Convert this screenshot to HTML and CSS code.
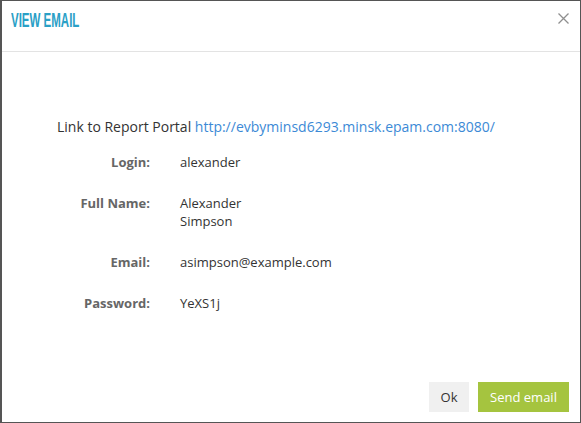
FILE: index.html
```html
<!DOCTYPE html>
<html>
<head>
<meta charset="utf-8">
<link rel="stylesheet" href="styles.css">
</head>
<body>
<div class="dialog">
  <div class="header">
    <h1 class="title">VIEW EMAIL</h1>
    <span class="close">
      <svg width="11" height="11" viewBox="0 0 11 11"><path d="M0.5 0.5L10.5 10.5M10.5 0.5L0.5 10.5" stroke="#8f8f8f" stroke-width="1.3" fill="none"/></svg>
    </span>
  </div>
  <div class="body">
    <p class="link-line">Link to Report Portal <a href="#">http://evbyminsd6293.minsk.epam.com:8080/</a></p>
    <div class="fields">
      <div class="label">Login:</div><div class="value">alexander</div>
      <div class="label">Full Name:</div><div class="value">Alexander<br>Simpson</div>
      <div class="label">Email:</div><div class="value">asimpson@example.com</div>
      <div class="label">Password:</div><div class="value">YeXS1j</div>
    </div>
  </div>
  <div class="footer">
    <button class="btn btn-ok">Ok</button>
    <button class="btn btn-send">Send email</button>
  </div>
</div>
</body>
</html>
```
FILE: styles.css
```css
html, body { margin: 0; padding: 0; background: #fff; }
body { font-family: "Open Sans", sans-serif; font-size: 13px; color: #333; }
.dialog {
  width: 581px; height: 423px; box-sizing: border-box;
  border: 1px solid #555; border-left-width: 2px;
  display: flex; flex-direction: column; background: #fff;
}
.header {
  height: 50px; border-bottom: 1px solid #e3e3e3;
  display: flex; align-items: flex-start; justify-content: space-between;
  padding: 0 0 0 9px;
}
.title {
  margin: 9px 0 0; font-family: "Liberation Sans", Arial, sans-serif;
  font-weight: bold; font-size: 20px; line-height: 20px; color: #2aa0c6;
  transform: scaleX(0.575); transform-origin: left center; white-space: nowrap;
}
.close { margin: 12px 11px 0 0; line-height: 0; }
.body { flex: 1; padding: 66px 0 0 55px; }
.link-line { margin: 0; font-size: 14px; line-height: 18px; color: #333; }
.link-line a { color: #3c8ad6; text-decoration: none; }
.fields {
  display: grid; grid-template-columns: 93px auto; column-gap: 30px; row-gap: 23px;
  margin-top: 17px; line-height: 18px;
}
.label { text-align: right; font-weight: bold; color: #666; }
.value { color: #333; }
.footer { display: flex; justify-content: flex-end; gap: 9px; padding: 0 11px 10px 0; }
.btn {
  border: 0; height: 30px; font-family: "Open Sans", sans-serif; font-size: 13px;
  padding: 0; cursor: pointer;
}
.btn-ok { background: #f0f0f0; color: #333; width: 40px; }
.btn-send { background: #a5c43f; color: #fff; width: 91px; }
```
